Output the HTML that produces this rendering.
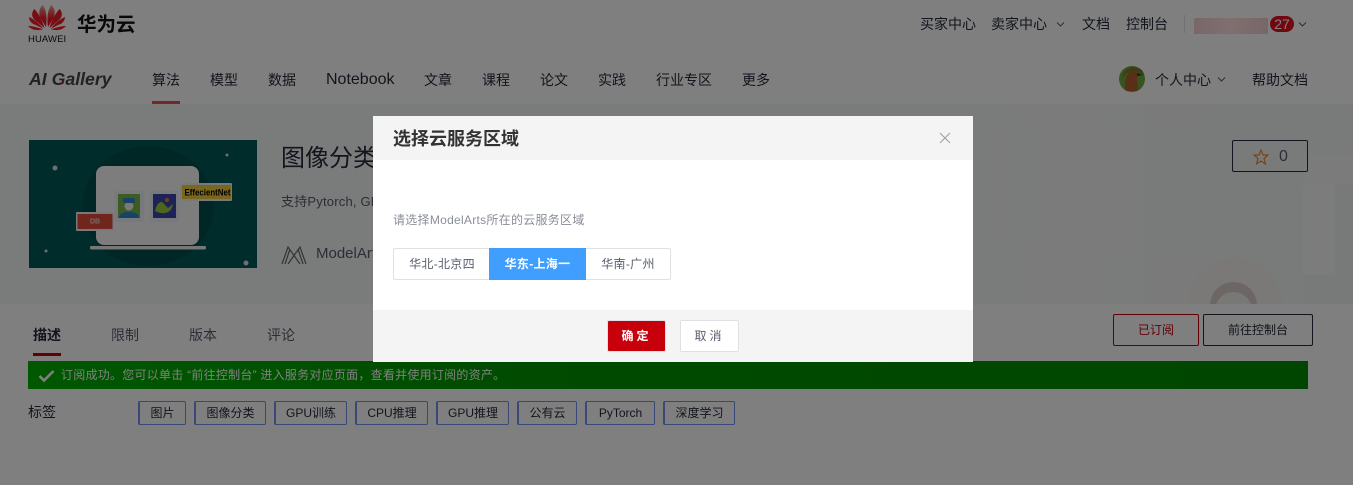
<!DOCTYPE html>
<html><head><meta charset="utf-8"><style>
*{box-sizing:border-box}
html,body{margin:0;padding:0}
body{width:1353px;height:485px;overflow:hidden;position:relative;background:#fff;font-family:"Liberation Sans","Noto Sans CJK SC",sans-serif;color:#252b3a}
.a{position:absolute;white-space:nowrap}
.n{font-size:14px;line-height:20px;top:70px}
.t{font-size:14px;line-height:20px;top:14px}
.tab{font-size:14px;line-height:20px;top:325px;color:#575d6c}
.tag{position:absolute;top:401px;height:24px;border:1px solid #7090ee;border-left-width:2px;border-radius:2px;font-size:12px;line-height:22px;text-align:center;color:#252b3a}
.ov{position:absolute;left:0;top:0;width:1353px;height:485px;background:rgba(0,0,0,.5)}
.m{position:absolute;left:373px;top:116px;width:600px;height:246px;background:#fff}
.seg{position:absolute;top:132px;height:32px;font-size:12px;letter-spacing:.3px;line-height:30px;text-align:center;color:#575d6c;background:#fff;border:1px solid #dfe1e6}
</style></head><body>
<svg class="a" style="left:28px;top:5px" width="38" height="28" viewBox="0 0 38 28"><defs><linearGradient id="p" x1="0" y1="0" x2="0" y2="1"><stop offset="0" stop-color="#f2a0a0"/><stop offset=".6" stop-color="#ee1c26"/><stop offset="1" stop-color="#e3101e"/></linearGradient></defs><g fill="#ee1c26"><path fill="url(#p)" d="M14.500 0C10.500 4 10.500 10 13 14L18 22C19 15 19 5 14.500 0Z"/><path fill="url(#p)" d="M23.500 0C27.500 4 27.500 10 25 14L20 22C19 15 19 5 23.500 0Z"/><path d="M6.500 4C2.500 8 4 13 8 16L16.500 23C14.500 16 11 9 6.500 4Z"/><path d="M31.500 4C35.500 8 34 13 30 16L21.500 23C23.500 16 27 9 31.500 4Z"/><path d="M1 12C1 16 4 19 8 20L15.500 24C11.500 19 6 14 1 12Z"/><path d="M37 12C37 16 34 19 30 20L22.500 24C26.500 19 32 14 37 12Z"/><path d="M0 21C3 24.500 8 26 15 24.500C10 22.500 5 21 0 21Z"/><path d="M38 21C35 24.500 30 26 23 24.500C28 22.500 33 21 38 21Z"/></g></svg>
<div class="a" style="left:28px;top:34px;width:38px;font-size:9.500px;line-height:11px;letter-spacing:.1px;color:#111">HUAWEI</div>
<div class="a" style="left:77px;top:12px;font-size:19.500px;line-height:26px;font-weight:bold;color:#111">华为云</div>
<div class="a t" style="left:920px">买家中心</div>
<div class="a t" style="left:991px">卖家中心</div>
<svg class="a" style="left:1056px;top:21px" width="9" height="7"><path d="M1 1.500L4.500 5L8 1.500" fill="none" stroke="#575d6c"/></svg>
<div class="a t" style="left:1082px">文档</div>
<div class="a t" style="left:1126px">控制台</div>
<div class="a" style="left:1184px;top:15px;width:1px;height:18px;background:#dfe1e6"></div>
<div class="a" style="left:1194px;top:18px;width:74px;height:16px;background:linear-gradient(90deg,#f4cfd2,#ffe0e0 50%,#eecfd0)"></div>
<div class="a" style="left:1270px;top:16px;width:24px;height:16px;border-radius:8px;background:#e3101e;color:#fff;font-size:14px;line-height:16px;text-align:center">27</div>
<svg class="a" style="left:1298px;top:21px" width="9" height="7"><path d="M1 1.500L4.500 5L8 1.500" fill="none" stroke="#575d6c"/></svg>
<div class="a" style="left:29px;top:69px;font-size:17.700px;line-height:20px;font-weight:bold;font-style:italic;color:#444">AI <span style="background:linear-gradient(135deg,#444 72%,#e3101e 72%);-webkit-background-clip:text;background-clip:text;color:transparent">G</span>allery</div>
<div class="a n" style="left:152px">算法</div>
<div class="a" style="left:152px;top:101px;width:28px;height:3px;background:#e3504f"></div>
<div class="a n" style="left:210px">模型</div>
<div class="a n" style="left:268px">数据</div>
<div class="a n" style="left:326px;font-size:16px">Notebook</div>
<div class="a n" style="left:424px">文章</div>
<div class="a n" style="left:482px">课程</div>
<div class="a n" style="left:540px">论文</div>
<div class="a n" style="left:598px">实践</div>
<div class="a n" style="left:656px">行业专区</div>
<div class="a n" style="left:742px">更多</div>
<svg class="a" style="left:1119px;top:66px" width="26" height="26" viewBox="0 0 26 26"><circle cx="13" cy="13" r="13" fill="#6fa63c"/><path d="M3 13C4 5 9 1 14 1C21 1 25 5 25 9L16 5C9 5 5 9 3 13Z" fill="#7a7a30"/><path d="M7 25C4 17 7 7 13 5C17 4 18 6 19 8L18 12C18 17 20 21 18 25Z" fill="#b0602f"/><path d="M18 7L24 9L18 10Z" fill="#1e3a44"/></svg>
<div class="a n" style="left:1155px">个人中心</div>
<svg class="a" style="left:1217px;top:76px" width="9" height="7"><path d="M1 1.500L4.500 5L8 1.500" fill="none" stroke="#575d6c"/></svg>
<div class="a n" style="left:1252px">帮助文档</div>

<div class="a" style="left:0;top:104px;width:1353px;height:200px;background:linear-gradient(90deg,#f5f7f6,#f4f7f6 60%,#f3f5f5);overflow:hidden">
<div class="a" style="left:1303px;top:51px;width:50px;height:30px;background:#f6f7f6"></div>
<div class="a" style="left:1303px;top:81px;width:32px;height:90px;background:#f8f9f8"></div>
<div class="a" style="left:1335px;top:81px;width:18px;height:119px;background:#f0f3f3"></div>
<div class="a" style="left:1303px;top:171px;width:32px;height:29px;background:#f0f3f3"></div>
<div class="a" style="left:1187px;top:154px;width:96px;height:96px;border-radius:50%;background:#f7f2ee"></div>
<div class="a" style="left:1210px;top:178px;width:47px;height:47px;border-radius:50%;background:#d8cfc8"></div>
<div class="a" style="left:1215px;top:188px;width:37px;height:37px;border-radius:50%;background:#f0f1ef"></div>
</div>
<div class="a" style="left:0;top:304px;width:1353px;height:50px;background:#fff"></div>

<svg class="a" style="left:29px;top:140px" width="228" height="128" viewBox="0 0 228 128">
<rect width="228" height="128" fill="#005a56"/>
<ellipse cx="119" cy="66" rx="66" ry="60" fill="#004e4a"/>
<circle cx="26" cy="28" r="2.500" fill="#ddd"/><circle cx="198" cy="15" r="1.500" fill="#ddd"/><circle cx="17" cy="111" r="1.500" fill="#ddd"/><circle cx="217" cy="123" r="2.500" fill="#ddd"/>
<rect x="67" y="26" width="103" height="79" rx="8" fill="#fafafa"/>
<rect x="61" y="106" width="116" height="3.500" rx="1.500" fill="#eee"/>
<rect x="86" y="51" width="29" height="31" fill="#f0f3f9"/><rect x="89" y="54" width="22" height="24" fill="#7bb64a"/>
<path d="M90 78C91 72 96 72 100 72C104 72 109 72 110 78Z" fill="#2f86d6"/><circle cx="100" cy="66" r="4.500" fill="#f6f0ea"/><rect x="94" y="58" width="12" height="5" rx="2" fill="#2f86d6"/>
<rect x="121" y="51" width="29" height="31" fill="#f0f3f9"/><rect x="124" y="54" width="23" height="24" fill="#3a45ae"/>
<path d="M126 71C128 62 133 60 135 64L139 68L144 64C143 72 136 76 126 71Z" fill="#9acb3a"/><circle cx="138" cy="60" r="2" fill="#e8802c"/>
<rect x="47" y="72" width="38" height="19" rx="1" fill="#f0f3f9"/><rect x="48.500" y="74" width="35" height="15" fill="#e14c39"/>
<text x="66" y="83.500" font-size="7" font-weight="bold" fill="#f3d5cf" text-anchor="middle">DB</text>
<rect x="151" y="43" width="52" height="18" rx="1" fill="#f0f3f9"/><rect x="153" y="45" width="49" height="14" fill="#f5cf3c"/>
<text x="178.500" y="55.500" font-size="9" font-weight="bold" fill="#000" text-anchor="middle" textLength="46" lengthAdjust="spacingAndGlyphs">EffecientNet</text>
</svg>
<div class="a" style="left:281px;top:143px;font-size:24px;line-height:32px">图像分类</div>
<div class="a" style="left:281px;top:193px;font-size:13px;letter-spacing:.2px;line-height:18px;color:#575d6c">支持Pytorch, GPU</div>
<svg class="a" style="left:281px;top:245px" width="26" height="22" viewBox="0 0 26 22"><path d="M1 19L7 2L19 19M25 19L19 2L7 19M4 19L9 4M22 19L17 4" fill="none" stroke="#666" stroke-width="1.200"/></svg>
<div class="a" style="left:316px;top:244px;font-size:15px;line-height:20px;color:#575d6c">ModelArts</div>

<div class="a" style="left:1232px;top:140px;width:76px;height:32px;border:1px solid #252b3a;border-radius:2px"></div>
<svg class="a" style="left:1253px;top:149px" width="16" height="16" viewBox="0 0 16 16"><path d="M8 1L10 6H15L11 9.500L12.500 15L8 12L3.500 15L5 9.500L1 6H6Z" fill="none" stroke="#f08a3c" stroke-width="1.200"/></svg>
<div class="a" style="left:1279px;top:147px;font-size:16px;line-height:20px;color:#575d6c">0</div>

<div class="a tab" style="left:33px;top:325px;font-weight:bold;color:#252b3a">描述</div>
<div class="a" style="left:33px;top:353px;width:28px;height:3px;background:#c7000b"></div>
<div class="a tab" style="left:111px">限制</div>
<div class="a tab" style="left:189px">版本</div>
<div class="a tab" style="left:267px">评论</div>
<div class="a" style="left:1113px;top:314px;width:86px;height:32px;border:1px solid #c7000b;border-radius:2px;color:#c7000b;font-size:12px;line-height:30px;text-align:center">已订阅</div>
<div class="a" style="left:1203px;top:314px;width:110px;height:32px;border:1px solid #252b3a;border-radius:2px;font-size:12px;line-height:30px;text-align:center">前往控制台</div>
<div class="a" style="left:28px;top:361px;width:1280px;height:28px;background:linear-gradient(90deg,#00b000,#009600 40%,#008c00)"></div>
<svg class="a" style="left:38px;top:369px" width="17" height="14" viewBox="0 0 17 14"><path d="M1.500 7L6 11.500L15.500 2" fill="none" stroke="#fff" stroke-width="2.600"/></svg>
<div class="a" style="left:61px;top:366px;font-size:12px;letter-spacing:.25px;line-height:18px;color:#fff">订阅成功。您可以单击 “前往控制台” 进入服务对应页面，查看并使用订阅的资产。</div>
<div class="a" style="left:28px;top:402px;font-size:14px;line-height:20px;color:#252b3a">标签</div>
<div class="tag" style="left:138px;width:48px">图片</div>
<div class="tag" style="left:194px;width:72px">图像分类</div>
<div class="tag" style="left:274px;width:73px">GPU训练</div>
<div class="tag" style="left:355px;width:73px">CPU推理</div>
<div class="tag" style="left:436px;width:73px">GPU推理</div>
<div class="tag" style="left:517px;width:60px">公有云</div>
<div class="tag" style="left:585px;width:70px">PyTorch</div>
<div class="tag" style="left:663px;width:72px">深度学习</div>

<div class="ov"></div>
<div class="m">
<div class="a" style="left:0;top:0;width:600px;height:44px;background:#f4f4f4"></div>
<div class="a" style="left:20px;top:11px;font-size:18px;line-height:24px;font-weight:bold;color:#333">选择云服务区域</div>
<svg class="a" style="left:566px;top:16px" width="12" height="12"><path d="M1 1L11 11M11 1L1 11" stroke="#9a9da3" fill="none"/></svg>
<div class="a" style="left:20px;top:95px;font-size:12px;letter-spacing:.28px;line-height:18px;color:#8a8e99">请选择ModelArts所在的云服务区域</div>
<div class="seg" style="left:20px;width:97px;border-radius:2px 0 0 2px;border-right:0">华北-北京四</div>
<div class="seg" style="left:116px;width:97px;background:#409eff;border-color:#409eff;color:#fff;font-weight:bold">华东-上海一</div>
<div class="seg" style="left:213px;width:85px;border-radius:0 2px 2px 0;border-left:0">华南-广州</div>
<div class="a" style="left:0;top:194px;width:600px;height:52px;background:#f4f4f4"></div>
<div class="a" style="left:234px;top:204px;width:59px;height:32px;background:#c7000b;border:1px solid #dfe1e6;border-radius:2px;color:#fff;font-size:12px;line-height:30px;text-align:center;font-weight:bold;letter-spacing:3px">确定</div>
<div class="a" style="left:307px;top:204px;width:59px;height:32px;background:#fff;border:1px solid #dfe1e6;border-radius:2px;color:#575d6c;font-size:12px;line-height:30px;text-align:center;letter-spacing:3px">取消</div>
</div>
</body></html>
